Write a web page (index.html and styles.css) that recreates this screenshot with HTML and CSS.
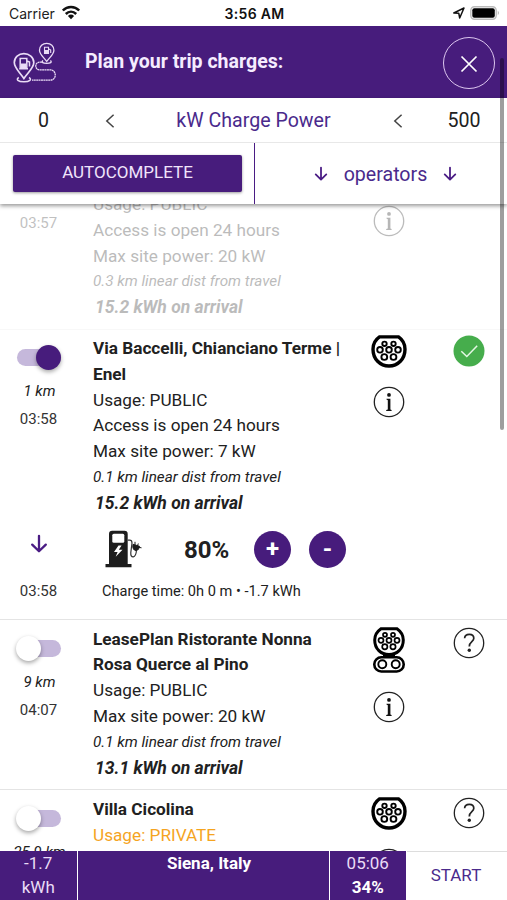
FILE: index.html
```html
<!DOCTYPE html>
<html lang="en">
<head>
<meta charset="utf-8">
<title>Plan your trip charges</title>
<link rel="stylesheet" href="styles.css">
</head>
<body>
<svg class="defs" width="0" height="0">
  <defs>
    <symbol id="type2" viewBox="0 0 36 33">
      <path d="M8.500 1.900h19C32 5 34 9 34 14.200C34 24 27 31 18 31S2 24 2 14.200C2 9 4 5 8.500 1.900z" fill="#fff" stroke="#000" stroke-width="3.400"/>
      <g fill="none" stroke="#000" stroke-width="1.900">
        <circle cx="13.500" cy="8.800" r="2.200"/><circle cx="22.500" cy="8.800" r="2.200"/>
        <circle cx="9" cy="14.800" r="2.800"/><circle cx="18" cy="14.800" r="2.800"/><circle cx="27" cy="14.800" r="2.800"/>
        <circle cx="13.300" cy="22" r="2.900"/><circle cx="22.500" cy="22" r="2.900"/>
      </g>
    </symbol>
    <symbol id="ccs" viewBox="0 0 32 46">
      <path d="M8 1.700h16C28 4.500 30.300 8 30.300 13C30.300 22 24 27.500 16 27.500S1.700 22 1.700 13C1.700 8 4 4.500 8 1.700z" fill="#fff" stroke="#000" stroke-width="3"/>
      <path d="M10 27.500h12v3h-12z" fill="#000"/>
      <g fill="none" stroke="#000" stroke-width="1.700">
        <circle cx="12" cy="7.800" r="2"/><circle cx="20" cy="7.800" r="2"/>
        <circle cx="8" cy="13.300" r="2.500"/><circle cx="16" cy="13.300" r="2.500"/><circle cx="24" cy="13.300" r="2.500"/>
        <circle cx="11.800" cy="19.700" r="2.600"/><circle cx="20" cy="19.700" r="2.600"/>
      </g>
      <rect x="1.300" y="30.300" width="29.400" height="14.200" rx="7" fill="#fff" stroke="#000" stroke-width="2.600"/>
      <g fill="none" stroke="#000" stroke-width="1.900"><circle cx="9.300" cy="37.300" r="4"/><circle cx="22.700" cy="37.300" r="4"/></g>
    </symbol>
    <symbol id="info" viewBox="0 0 32 32">
      <circle cx="16" cy="16" r="14.700" fill="none" stroke="#222" stroke-width="1.300"/>
      <circle cx="16" cy="8.900" r="1.900" fill="#111"/>
      <path d="M13.500 12.800h3.900v10.600l1.200.7v.8h-5.400v-.8l1.600-.7v-9.100l-1.300-.7z" fill="#111"/>
    </symbol>
    <symbol id="help" viewBox="0 0 32 32">
      <circle cx="16" cy="16" r="14.700" fill="none" stroke="#222" stroke-width="1.300"/>
      <path d="M11.600 11.200C12 6.200 20.800 6.200 20.800 11.300C20.800 14.800 16.300 14.500 16.300 19.400" fill="none" stroke="#222" stroke-width="1.700"/>
      <circle cx="16.300" cy="23.200" r="1.700" fill="#222"/>
    </symbol>
    <symbol id="down" viewBox="0 0 18 20">
      <path d="M9 1.800V17M2.200 10.600L9 17.300L15.800 10.600" fill="none" stroke="#4a1c84" stroke-width="2.300" stroke-linecap="round" stroke-linejoin="round"/>
    </symbol>
    <symbol id="lt" viewBox="0 0 10 16">
      <path d="M8.600 1.700L1.800 8L8.600 14.300" fill="none" stroke="#444" stroke-width="1.500"/>
    </symbol>
  </defs>
</svg>
<div class="phone">
  <div class="status-bar">
    <div class="carrier">Carrier
      <svg width="20" height="15" viewBox="0 0 20 15"><g fill="none" stroke="#111" stroke-width="2.500"><path d="M1.800 5.500C6.500.7 13.500.7 18.200 5.500"/><path d="M4.800 9C7.900 5.900 12.100 5.900 15.200 9"/></g><path d="M6.900 10.900Q10 8.200 13.100 10.900L10 14.200z" fill="#111"/></svg>
    </div>
    <div class="clock">3:56 AM</div>
    <div class="battery">
      <svg width="12" height="12" viewBox="0 0 12 12"><path d="M.8 6L11 1L6.700 11L5.800 6.300z" fill="none" stroke="#111" stroke-width="1.500" stroke-linejoin="round"/></svg>
      <svg width="30" height="14" viewBox="0 0 30 14"><rect x=".8" y=".8" width="25.400" height="12.400" rx="3.600" fill="#fff" stroke="#bbb" stroke-width="1.400"/><rect x="2.300" y="2.300" width="22.500" height="9.400" rx="2" fill="#000"/><path d="M27.800 4.800q2 2.200 0 4.400z" fill="#aaa"/></svg>
    </div>
  </div>
  <header class="header">
    <svg class="trip-icon" width="44" height="42" viewBox="0 0 44 42" fill="none" stroke="#eadcf6" stroke-width="1.300">
      <path d="M10.900 36.500C7 30.500 1.300 26 1.300 20.500C1.300 15.300 5.600 11.600 10.900 11.600S20.800 15.300 20.800 20.500C20.800 26 14.800 30.500 10.900 36.500z" stroke-width="1.700"/>
      <path d="M5.800 35.500C2.500 37.500 5 39.700 10.900 39.700S19.300 37.500 16 35.500" stroke-width="1.500"/>
      <path d="M33.700 19.500C31 15.500 26.500 12.500 26.500 8.200C26.500 4 29.600 1.300 33.700 1.300S40.900 4 40.900 8.200C40.900 12.500 36.400 15.500 33.700 19.500z"/>
      <path d="M30 18.600C28 20.300 30 21.300 33.700 21.300S39.400 20.300 37.400 18.600"/>
      <path d="M29 20.200H26.500C21.500 20.200 21.500 27.800 26.500 27.800H37C44 27.800 44 38.200 37 38.200H19" stroke-dasharray="2 .4"/>
      <path d="M7.200 16.500h6.600v9.800H7.200zM6.200 26.700h8.800M14 19l2.500 1v4.500" stroke-width="1.500"/>
      <path d="M8.500 17.500h4v3.200h-4z" stroke="none" fill="#471c7c"/><path d="M8 21.500h5v4.500H8z" stroke="none" fill="#eadcf6"/>
      <path d="M31.500 5.200h4v6.200h-4zM36 7l1.700 1v3" stroke-width="1.100"/><path d="M31.500 8h4v3.500h-4z" stroke="none" fill="#eadcf6"/>
    </svg>
    <h1 class="title">Plan your trip charges:</h1>
    <div class="close"><svg width="18" height="18" viewBox="0 0 18 18"><path d="M1.500 1.500L16.500 16.500M16.500 1.500L1.500 16.500" stroke="#fff" stroke-width="1.700"/></svg></div>
  </header>
  <section class="filters">
    <div class="power-row">
      <span>0</span>
      <svg width="10" height="16"><use href="#lt"/></svg>
      <span class="power-label">kW Charge Power</span>
      <svg width="10" height="16"><use href="#lt"/></svg>
      <span>500</span>
    </div>
    <div class="action-row">
      <div class="auto-cell"><div class="auto-button">AUTOCOMPLETE</div></div>
      <div class="operators"><svg width="14" height="16"><use href="#down"/></svg><span>operators</span><svg width="14" height="16"><use href="#down"/></svg></div>
    </div>
  </section>
  <main class="list">
    <article class="stop stop-past">
      <div class="side"><span class="time">03:57</span></div>
      <div class="details">
        <p>Usage: PUBLIC</p>
        <p>Access is open 24 hours</p>
        <p>Max site power: 20 kW</p>
        <p class="distance">0.3 km linear dist from travel</p>
        <p class="arrival">15.2 kWh on arrival</p>
      </div>
      <div class="plugs"><svg width="32" height="32"><use href="#info"/></svg></div>
      <div class="state"></div>
    </article>
    <article class="stop stop-active">
      <div class="side">
        <div class="toggle on"><i></i></div>
        <span class="km">1 km</span>
        <span class="time">03:58</span>
      </div>
      <div class="details">
        <h2>Via Baccelli, Chianciano Terme | Enel</h2>
        <p>Usage: PUBLIC</p>
        <p>Access is open 24 hours</p>
        <p>Max site power: 7 kW</p>
        <p class="distance">0.1 km linear dist from travel</p>
        <p class="arrival">15.2 kWh on arrival</p>
      </div>
      <div class="plugs"><svg width="36" height="33"><use href="#type2"/></svg><svg width="32" height="32"><use href="#info"/></svg></div>
      <div class="state"><svg width="32" height="32" viewBox="0 0 32 32"><circle cx="16" cy="16" r="15.500" fill="#46ad4c"/><path d="M8.300 16.200L13.800 21.500L24.200 10.800" fill="none" stroke="#e4f7e4" stroke-width="1.500"/></svg></div>
    </article>
    <div class="charge">
      <div class="charge-side">
        <svg width="18" height="20"><use href="#down"/></svg>
        <span class="time">03:58</span>
      </div>
      <div class="charge-main">
        <div class="charge-row">
          <svg width="37" height="38" viewBox="0 0 37 38"><path d="M4 34V4Q4 .8 7.200.8H19.500Q22.700.8 22.700 4V34H26.500V37.300H.5V34z" fill="#1d1d1d"/><rect x="7.300" y="3.700" width="12" height="9" rx="1.500" fill="#fff"/><path d="M13.500 15.500L9 22H12.600L10.700 26.700L17.500 19.800H13.800L16.600 15.500z" fill="#fff"/><path d="M22.700 10.200H24.700Q27 10.200 27 13L25.800 22.500Q25.500 27 28.300 26.800Q31 26.500 31.500 20" fill="none" stroke="#333" stroke-width="1.200"/><path d="M28 14.300L34.500 16.300L33.500 19.300Q31 22 28.500 19.300Q27.300 17 28 14.300zM30 11.800v4M33.300 13.500l-1 3M33.500 17.300l3 .5" fill="#1d1d1d" stroke="#1d1d1d"/></svg>
          <span class="percent">80%</span>
          <span class="round">+</span>
          <span class="round">-</span>
        </div>
        <p class="charge-time">Charge time: 0h 0 m • -1.7 kWh</p>
      </div>
    </div>
    <article class="stop">
      <div class="side">
        <div class="toggle"><i></i></div>
        <span class="km">9 km</span>
        <span class="time">04:07</span>
      </div>
      <div class="details">
        <h2>LeasePlan Ristorante Nonna Rosa Querce al Pino</h2>
        <p>Usage: PUBLIC</p>
        <p>Max site power: 20 kW</p>
        <p class="distance">0.1 km linear dist from travel</p>
        <p class="arrival">13.1 kWh on arrival</p>
      </div>
      <div class="plugs"><svg width="32" height="46"><use href="#ccs"/></svg><svg width="32" height="32"><use href="#info"/></svg></div>
      <div class="state"><svg width="32" height="32"><use href="#help"/></svg></div>
    </article>
    <article class="stop">
      <div class="side">
        <div class="toggle"><i></i></div>
        <span class="km">25.9 km</span>
      </div>
      <div class="details">
        <h2>Villa Cicolina</h2>
        <p class="private">Usage: PRIVATE</p>
      </div>
      <div class="plugs"><svg width="36" height="33"><use href="#type2"/></svg><svg width="32" height="32"><use href="#info"/></svg></div>
      <div class="state"><svg width="32" height="32"><use href="#help"/></svg></div>
    </article>
  </main>
  <footer class="footer">
    <div class="cell">-1.7<br>kWh</div>
    <div class="cell destination">Siena, Italy</div>
    <div class="cell">05:06<br><b>34%</b></div>
    <div class="start">START</div>
  </footer>
  <div class="scrollbar"></div>
</div>
</body>
</html>
```
FILE: styles.css
```css
* { box-sizing: border-box; }
body { margin: 0; background: #fff; font-family: Roboto, sans-serif; color: #212121; font-size: 17.200px; line-height: 25.800px; }
h1, h2, p { margin: 0; }
svg { display: block; flex: none; }
.defs { position: absolute; }
.phone { position: relative; width: 507px; height: 900px; display: flex; flex-direction: column; overflow: hidden; }

.status-bar { height: 25.500px; flex: none; display: grid; grid-template-columns: 1fr auto 1fr; align-items: center; padding: 2px 7px 0 9px; font-family: Inter, sans-serif; font-size: 14px; color: #222; line-height: 20px; }
.carrier { display: flex; align-items: center; gap: 6px; }
.carrier svg { margin-top: -2px; }
.clock { font-weight: 600; color: #111; letter-spacing: .3px; }
.battery { display: flex; justify-content: flex-end; align-items: center; gap: 5px; margin-top: -2px; }

.header { height: 72.500px; flex: none; background: #471c7c; display: flex; align-items: center; padding: 0 12px 0 13px; }
.trip-icon { margin-top: 2px; }
.title { margin-left: 28px; flex: 1; color: #f5ecff; font-size: 19.550px; font-weight: 700; }
.close { width: 52px; height: 52px; border: 1.500px solid #dcc6ef; border-radius: 50%; display: flex; align-items: center; justify-content: center; padding-top: 2px; margin-top: 2px; }

.filters { flex: none; position: relative; z-index: 1; background: #fff; box-shadow: 0 2px 4px rgba(0,0,0,.4); }
.power-row { height: 44px; display: grid; grid-template-columns: 87px 46px 241px 47px 86px; align-items: center; justify-items: center; font-size: 19.600px; padding-top: 1px; }
.power-label { color: #4a2a8c; }
.action-row { height: 62px; display: flex; border-top: 1px solid #e8e8e8; }
.auto-cell { width: 255px; padding: 12px 12px 12px 13px; border-right: 1.500px solid #4a1c84; }
.auto-button { height: 37px; border-radius: 2px; background: #471c7c; color: #f0e4fb; font-size: 17px; text-align: center; line-height: 35px; box-shadow: 0 1px 3px rgba(0,0,0,.4); }
.operators { flex: 1; display: flex; justify-content: center; align-items: center; gap: 16px; padding: 2px 0 0 9px; color: #4a2a8c; font-size: 19.600px; }
.operators svg { margin-top: -2px; }

.list { flex: 1; min-height: 0; overflow: hidden; }
.stop { display: grid; grid-template-columns: 77px 271px 81px 79px; border-top: 1px solid #e4e4e4; padding: 7px 0 8px; }
.details { padding-left: 16px; }
h2 { font-size: inherit; font-weight: 700; }
.side { display: flex; flex-direction: column; align-items: center; }
.km, .distance { font-size: 15px; font-style: italic; }
.distance { font-size: 15.250px; }
.km { margin-top: 12px; padding-left: 2px; line-height: 26px; }
.time { font-size: 15px; line-height: 30px; color: #333; }
.arrival { font-weight: 700; font-style: italic; font-size: 17.500px; padding-left: 2px; }
.private { color: #f5a41f; }
.plugs, .state { display: flex; flex-direction: column; align-items: center; }
.plugs { gap: 18px; }
.stop-past { opacity: .3; padding-top: 0; border-top: 0; height: 125px; }
.stop-past .side { padding-top: 4px; }
.stop-past .details { margin-top: -12px; }
.stop-past .plugs { padding-top: 1px; }
.stop-active { border-color: #f8f8f8; padding: 6px 0 7px; }
.stop-active .plugs, .stop-active .state { margin-top: -1px; }

.toggle { width: 44px; height: 17px; border-radius: 9px; background: #c5b8db; margin-top: 13px; display: flex; align-items: center; }
.toggle i { width: 25px; height: 25px; flex: none; border-radius: 50%; background: #fff; box-shadow: 0 2px 4px rgba(0,0,0,.35); margin-left: -1px; }
.toggle.on i { background: #471c7c; margin-left: 19px; }

.charge { height: 95px; display: flex; }
.charge-side { width: 77px; display: flex; flex-direction: column; align-items: center; padding-top: 10px; gap: 22px; }
.charge-main { padding: 7px 0 0 28px; }
.charge-row { display: flex; align-items: center; height: 37px; }
.percent { font-size: 24px; font-weight: 700; margin-left: 42px; width: 70px; line-height: 30px; padding-top: 2px; }
.round { width: 37px; height: 37px; border-radius: 50%; background: #471c7c; color: #fff; font-size: 24px; font-weight: 700; text-align: center; line-height: 37px; margin-right: 18px; }
.charge-time { font-size: 14.600px; margin: 11px 0 0 -3px; }

.footer { height: 49px; flex: none; display: flex; background: #471c7c; color: #eadcf6; line-height: 24px; text-align: center; font-size: 17px; }
.cell { width: 77.500px; border-right: 1.500px solid #fff; }
.destination { width: 252px; padding-left: 12px; font-weight: 700; color: #fff; }
.cell b { color: #fff; }
.start { flex: 1; background: #fff; border-top: 1px solid #ddd; color: #4a2a8c; font-size: 17px; line-height: 46px; padding-right: 2px; }
.scrollbar { position: absolute; z-index: 2; left: 499.500px; top: 58px; width: 4px; height: 372px; border-radius: 2px; background: rgba(0,0,0,.38); }
```
